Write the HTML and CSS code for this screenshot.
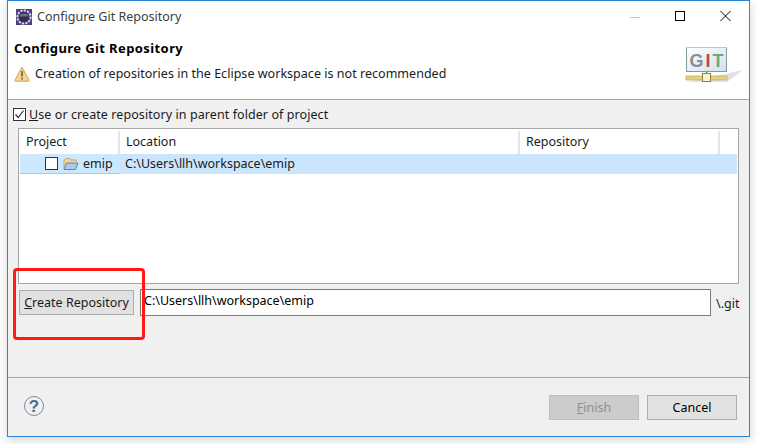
FILE: index.html
```html
<!DOCTYPE html>
<html lang="en">
<head>
<meta charset="utf-8">
<title>Configure Git Repository</title>
<link rel="stylesheet" href="styles.css">
</head>
<body>
<div class="window">
  <div class="top">
    <div class="titlebar">
      <svg class="app-icon" width="16" height="16" viewBox="0 0 16 16">
        <rect width="16" height="16" fill="#4b3f83"/>
        <circle cx="8" cy="8" r="6.6" fill="none" stroke="#d8d8e0" stroke-width="2" stroke-dasharray="2.2 1.2"/>
        <circle cx="8" cy="8" r="5" fill="#2f2f4a"/>
        <path d="M3.5 7.5a4.5 3 0 0 1 9 0z" fill="#6d6d8c"/>
      </svg>
      <span class="title">Configure Git Repository</span>
      <div class="controls">
        <svg width="12" height="12" viewBox="0 0 12 12"><path d="M0 6.500h10" stroke="#c4c4c4"/></svg>
        <svg width="12" height="12" viewBox="0 0 12 12"><rect x=".5" y=".5" width="9" height="9" fill="none" stroke="#000"/></svg>
        <svg width="12" height="12" viewBox="0 0 12 12"><path d="M.5 0l10 10M10.500 0L.5 10" stroke="#000" fill="none"/></svg>
      </div>
    </div>
    <div class="banner">
      <div class="banner-text">
        <h1 class="heading">Configure Git Repository</h1>
        <div class="message">
          <svg class="warn" width="16" height="16" viewBox="0 0 16 16">
            <path d="M8 1.2 15.2 14.4a.6.6 0 0 1-.5.8H1.3a.6.6 0 0 1-.5-.8z" fill="#f6d58e" stroke="#d9a24f"/>
            <path d="M8 5v5.5" stroke="#6b5a3a" stroke-width="1.6"/>
            <path d="M8 11.8v1.6" stroke="#6b5a3a" stroke-width="1.6"/>
          </svg>
          <span class="message-text">Creation of repositories in the Eclipse workspace is not recommended</span>
        </div>
      </div>
      <svg class="git-logo" width="60" height="40" viewBox="0 0 60 40">
        <defs>
          <linearGradient id="screen" x1="0" y1="0" x2="1" y2="1">
            <stop offset="0" stop-color="#ffffff"/>
            <stop offset="1" stop-color="#cfe0f2"/>
          </linearGradient>
        </defs>
        <path d="M1 37 L42 37 L58 25 L40 29z" fill="#d8d2de" opacity=".7"/>
        <rect x="1.500" y="2.500" width="40" height="24" fill="url(#screen)" stroke="#7f9c9c"/>
        <path d="M1 2.500h41" stroke="#e8bd8a"/>
        <text x="4.500" y="22" class="git-text"><tspan fill="#8c8c8c">G</tspan><tspan fill="#b84a4a">I</tspan><tspan fill="#6fa878">T</tspan></text>
        <path d="M21.500 27v2" stroke="#8a9a70" stroke-width="2"/>
        <rect x="1" y="31" width="41" height="4" fill="#e2d27e" stroke="#b7a64e" stroke-width=".6"/>
        <rect x="17.500" y="28.500" width="8" height="8" fill="#fbf3cf" stroke="#96803c"/>
      </svg>
    </div>
  </div>
  <div class="panel">
    <label class="use-parent">
      <span class="check checked"><svg width="11" height="11" viewBox="0 0 11 11"><path d="M1.500 5.500l2.800 3L9.500 1.500" fill="none" stroke="#333" stroke-width="1.200"/></svg></span>
      <span><u>U</u>se or create repository in parent folder of project</span>
    </label>
    <div class="table">
      <div class="thead">
        <div class="th col-project">Project</div>
        <div class="th col-location">Location</div>
        <div class="th col-repo">Repository</div>
        <div class="th col-rest"></div>
      </div>
      <div class="row">
        <div class="cell col-project project-cell">
          <span class="check row-check"></span>
          <svg class="folder" width="16" height="14" viewBox="0 0 16 14">
            <path d="M1 12V3h1l1-1.500h4L8 3h5v2" fill="#f1d99a" stroke="#c9a65c"/>
            <path d="M1 12.500 3.500 6H15l-2.500 6.500z" fill="#a9c9ee" stroke="#5f86b8"/>
          </svg>
          <span>emip</span>
        </div>
        <div class="cell">C:\Users\llh\workspace\emip</div>
      </div>
    </div>
    <div class="create-row">
      <button class="btn create" type="button"><u>C</u>reate Repository</button>
      <input class="path" type="text" value="C:\Users\llh\workspace\emip">
      <span class="suffix">\.git</span>
    </div>
  </div>
  <div class="footer">
    <svg class="help" width="20" height="20" viewBox="0 0 20 20">
      <circle cx="10" cy="10" r="9.500" fill="none" stroke="#7d8aa6"/>
      <text x="10" y="16" class="help-text">?</text>
    </svg>
    <div class="actions">
      <button class="btn disabled" type="button" disabled><u>F</u>inish</button>
      <button class="btn" type="button">Cancel</button>
    </div>
  </div>
</div>
<div class="annotation"></div>
</body>
</html>
```
FILE: styles.css
```css
* { box-sizing: border-box; }
html, body { height: 100%; }
body {
  margin: 0;
  background: #fff;
  font-family: "Noto Sans", "Open Sans", sans-serif;
  font-size: 12.5px;
  color: #1a1a1a;
  position: relative;
  overflow: hidden;
}
.window {
  width: 743px;
  height: 437px;
  margin-left: 7px;
  border: 1px solid #2b86d8;
  background: #f0f0f0;
  display: flex;
  flex-direction: column;
  box-shadow: 0 3px 10px rgba(0,0,0,.18);
}
.top { background: #fff; height: 99px; border-bottom: 1px solid #a6a6a6; flex: none; }
.titlebar { height: 31px; display: flex; align-items: center; padding-left: 8px; }
.app-icon { flex: none; }
.title { margin-left: 5px; color: #3c3c3c; }
.controls { margin-left: auto; display: flex; gap: 33px; padding-right: 17px; }
.banner { display: flex; justify-content: space-between; padding-left: 6px; padding-right: 4px; }
.heading { margin: 8px 0 0; font-size: 13px; letter-spacing: .4px; font-weight: 700; color: #000; line-height: 17px; }
.message { display: flex; align-items: center; gap: 5px; margin-top: 9px; line-height: 16px; }
.message-text { letter-spacing: .03px; }
.git-logo { margin-top: 13px; flex: none; }
.git-text { font: 700 18px "Liberation Sans", sans-serif; letter-spacing: 2px; }
.panel { flex: 1; padding: 7px 10px 0 5px; min-height: 0; }
.use-parent { display: flex; align-items: center; gap: 3px; height: 14px; letter-spacing: .08px; }
.check {
  width: 13px; height: 13px; flex: none; background: #fff; border: 1px solid #333;
  display: inline-flex; align-items: center; justify-content: center;
}
.table {
  margin: 7px 0 0 5px;
  height: 156px;
  border: 1px solid #a6a6a6;
  background: #fff;
}
.thead { display: flex; height: 25px; }
.th { padding-left: 6px; border-right: 2px solid #e5e5e5; margin: 2px 0 0; height: 23px; line-height: 22px; }
.col-project { width: 101px; flex: none; padding-left: 7px; }
.col-location { width: 400px; flex: none; }
.col-repo { width: 200px; flex: none; }
.col-rest { flex: 1; border-right: 0; }
.row {
  display: flex;
  height: 20px;
  margin: 0 1px;
  background: #cbe5fd;
  line-height: 19px;
}
.cell { padding-left: 5px; }
.project-cell {
  display: flex; align-items: center; gap: 5px; padding-left: 25px; width: 100px;
  background: #cce8ff; border-bottom: 1px solid #99ccf5; flex: none;
}
.project-cell .check { width: 13px; height: 13px; }
.project-cell span:last-child { margin-left: -1px; }
.folder { flex: none; }
.create-row { display: flex; align-items: center; margin-top: 5px; padding-left: 6px; }
.btn {
  font: inherit;
  color: #000;
  width: 90px;
  height: 25px;
  border: 1px solid #adadad;
  background: #e1e1e1;
  padding: 0;
}
.create { width: 115px; color: #1a1a1a; }
.path {
  flex: 1;
  margin-left: 6px;
  height: 27px;
  border: 1px solid #7a7a7a;
  background: #fff;
  font: inherit;
  color: #000;
  padding: 0 3px 5px;
  min-width: 0;
}
.suffix { margin-left: 5px; width: 23px; flex: none; padding-top: 2px; white-space: nowrap; }
.footer {
  flex: none;
  height: 59px;
  border-top: 1px solid #a6a6a6;
  display: flex;
  justify-content: space-between;
  align-items: flex-start;
  padding: 17px 12px 0 16px;
}
.help-text { font: 700 17px "Liberation Sans", sans-serif; fill: #55688f; text-anchor: middle; }
.help { margin-top: 1px; }
.actions { display: flex; gap: 8px; }
.disabled { background: #ccc; border-color: #bfbfbf; color: #8f8f8f; }
.annotation {
  position: absolute;
  left: 13px;
  top: 268px;
  width: 132px;
  height: 72px;
  border: 3px solid #ff1a12;
  border-radius: 4px;
}
```
